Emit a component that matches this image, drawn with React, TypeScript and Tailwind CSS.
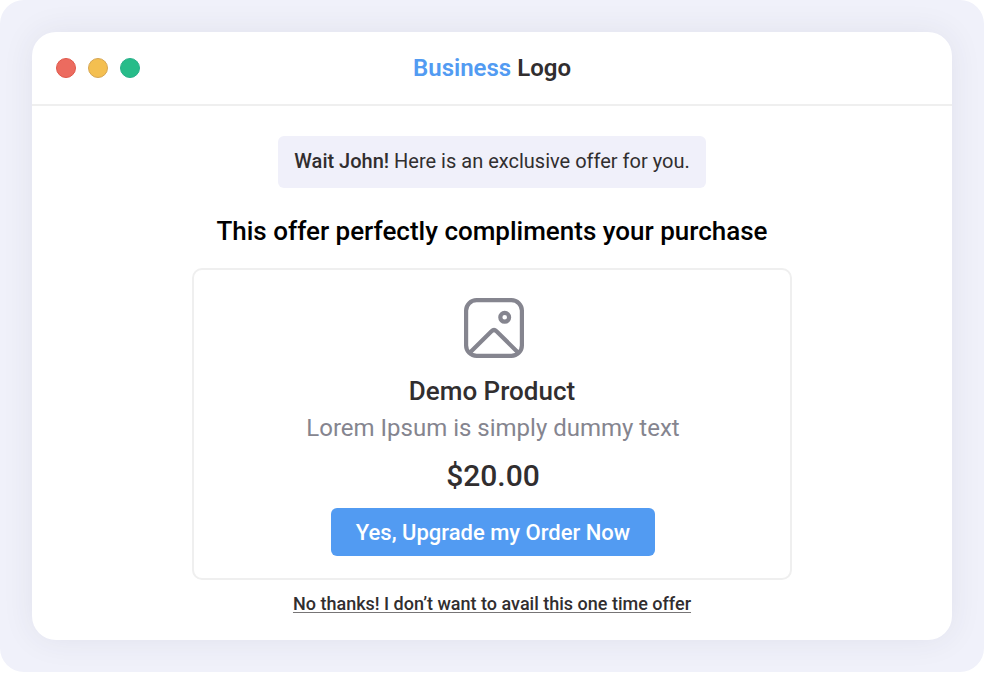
export default function App() {
  return (
    <div className="h-[674px] w-[984px] overflow-hidden bg-white font-[Roboto,sans-serif]">
      <div className="h-[672px] rounded-[24px] bg-[#f0f1fa] p-8">
        <div className="h-[608px] rounded-[24px] bg-white shadow-[0_0_32px_rgba(50,50,80,0.08)]">
          <header className="grid h-[74px] grid-cols-3 items-center border-b-2 border-[#efefef] px-6">
            <div className="flex gap-3">
              <span className="size-5 rounded-full border border-[#e0574a] bg-[#ec6b5f]" />
              <span className="size-5 rounded-full border border-[#d6a653] bg-[#f4bf50]" />
              <span className="size-5 rounded-full border border-[#27b08a] bg-[#27bc89]" />
            </div>
            <div className="text-center text-[24px] leading-7 font-semibold whitespace-nowrap text-[#312e2f]">
              <span className="text-[#529bf2]">Business</span> Logo
            </div>
          </header>
          <main className="flex flex-col items-center pt-[30px]">
            <p className="h-[52px] w-[428px] rounded-md bg-[#f0f0fa] text-center text-[20px] leading-[50px] whitespace-nowrap text-[#312e2f]">
              <b className="font-medium">Wait John!</b> Here is an exclusive offer for you.
            </p>
            <h1 className="mt-[27px] text-[26px] leading-8 font-medium whitespace-nowrap text-black">
              This offer perfectly compliments your purchase
            </h1>
            <section className="mt-[21px] flex h-[312px] w-[600px] flex-col items-center rounded-[10px] border-2 border-[#efefef] pt-7">
              <svg className="ml-1 size-[60px]" viewBox="0 0 60 60" fill="none" stroke="#85858f" strokeWidth="4.2">
                <rect x="2.1" y="2.1" width="55.8" height="55.8" rx="10.5" />
                <circle cx="40.7" cy="19.3" r="4.4" />
                <path d="M5 55.5 27.5 33.2Q30 30.8 32.5 33.2L55 55.5" />
              </svg>
              <h2 className="mt-[17px] text-[26px] leading-8 font-medium text-[#312e2f]">Demo Product</h2>
              <p className="mt-[5px] ml-0.5 text-[24px] leading-8 whitespace-nowrap text-[#85858f]">Lorem Ipsum is simply dummy text</p>
              <p className="mt-[13px] ml-0.5 text-[30px] leading-[38px] font-medium text-[#312e2f]">$20.00</p>
              <button className="mt-[13px] ml-0.5 h-12 w-[324px] shrink-0 rounded-md bg-[#529bf2] text-[22px] font-medium whitespace-nowrap text-white">
                Yes, Upgrade my Order Now
              </button>
            </section>
            <a className="mt-3 text-[18px] leading-6 font-medium whitespace-nowrap text-[#312e2f] underline decoration-[#777576] decoration-1 underline-offset-[2px] [text-decoration-skip-ink:none]">
              No thanks! I don’t want to avail this one time offer
            </a>
          </main>
        </div>
      </div>
    </div>
  );
}
